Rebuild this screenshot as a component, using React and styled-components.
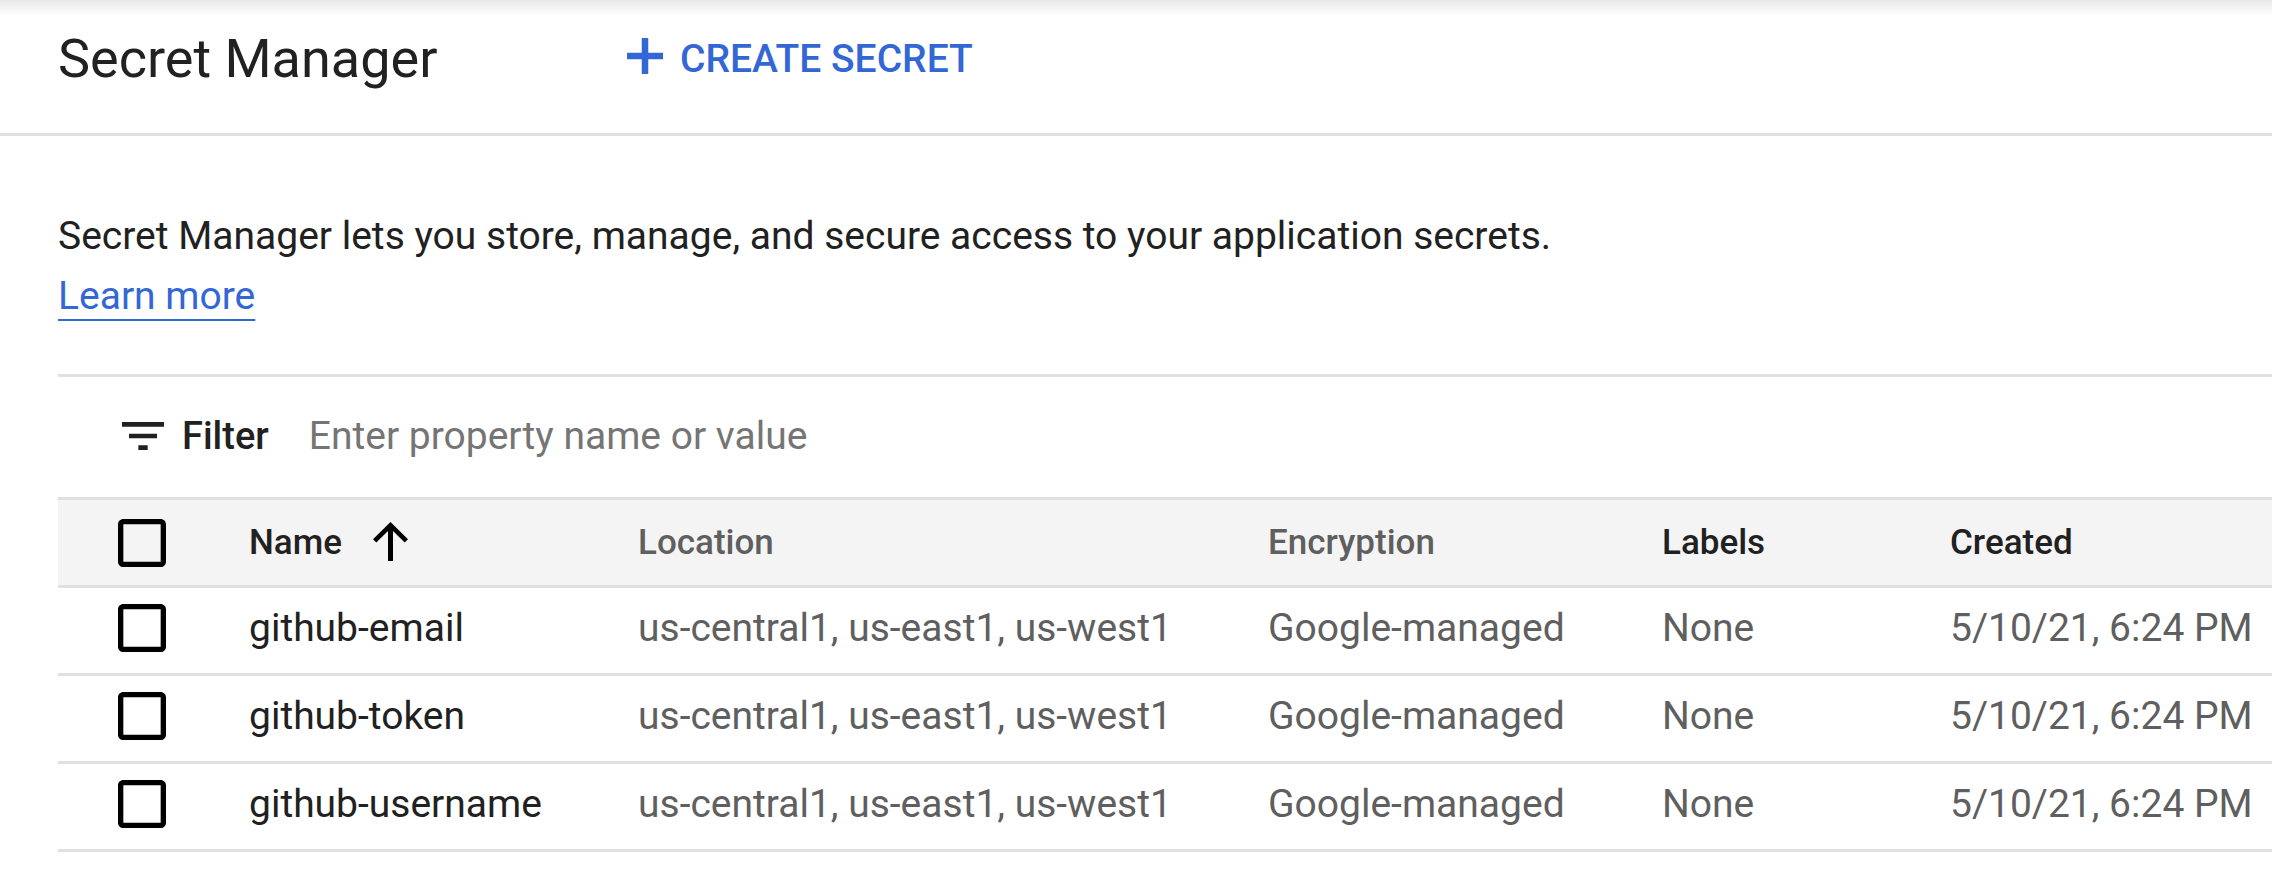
import React from "react"
import styled, { createGlobalStyle } from "styled-components"

const GlobalStyle = createGlobalStyle`
  html, body {
    margin: 0;
    padding: 0;
    background: #fff;
    overflow: hidden;
  }
  body {
    font-family: Roboto, "Liberation Sans", Arial, sans-serif;
    color: #212121;
  }
`

const Page = styled.div`
  width: 2272px;
  height: 884px;
  overflow: hidden;
  background: #fff;
`

const Header = styled.header`
  display: flex;
  align-items: center;
  height: 117px;
  padding: 0 0 16px 58px;
  border-bottom: 3px solid #e0e0e0;
  background: linear-gradient(#e8e8e8, #fff 16px);
`

const Title = styled.h1`
  margin: 0;
  width: 569px;
  flex: 0 0 auto;
  font-size: 54px;
  font-weight: 400;
  line-height: 64px;
  color: #212121;
`

const CreateButton = styled.button`
  display: flex;
  align-items: center;
  gap: 17px;
  padding: 0;
  border: none;
  background: none;
  font-family: inherit;
  font-size: 39px;
  font-weight: 500;
  line-height: 48px;
  text-transform: uppercase;
  color: #3367d6;
  cursor: pointer;

  & > svg {
    margin-bottom: 6px;
  }
`

const Intro = styled.section`
  padding: 70px 58px 0;
  font-size: 39px;
  line-height: 60px;
`

const Description = styled.p`
  margin: 0;
`

const LearnMore = styled.a`
  color: #3367d6;
  text-decoration: underline;
  text-decoration-thickness: 2px;
  text-underline-offset: 10px;
`

const Table = styled.div`
  margin: 48px 0 0 58px;
  border-top: 3px solid #e0e0e0;
`

const FilterBar = styled.div`
  display: flex;
  align-items: center;
  height: 118px;
  padding-bottom: 2px;
  padding-left: 57px;
  border-bottom: 3px solid #e0e0e0;
`

const FilterLabel = styled.label`
  margin-left: 11px;
  font-size: 38px;
  font-weight: 500;
  color: #212121;
`

const FilterInput = styled.input`
  flex: 1;
  margin-left: 40px;
  padding: 0;
  border: none;
  outline: none;
  background: none;
  font-family: inherit;
  font-size: 39px;
  color: #212121;

  &::placeholder {
    color: #757575;
  }
`

const Row = styled.div`
  display: grid;
  grid-template-columns: 191px 389px 630px 394px 288px 1fr;
  align-items: center;
  height: ${({ $head }) => ($head ? "85px" : "80px")};
  padding-bottom: ${({ $head }) => ($head ? "0" : "5px")};
  border-bottom: 3px solid #e0e0e0;
  background: ${({ $head }) => ($head ? "#f4f4f4" : "#fff")};
  font-size: ${({ $head }) => ($head ? "35px" : "39px")};
  font-weight: ${({ $head }) => ($head ? 500 : 400)};
`

const CheckCell = styled.div`
  display: flex;
  padding-left: 52px;
`

const Cell = styled.div`
  display: flex;
  align-items: center;
  white-space: nowrap;
  color: ${({ $muted }) => ($muted ? "#5f5f5f" : "#212121")};

  & > svg {
    margin-left: 31px;
    margin-bottom: 2px;
  }
`

const PlusIcon = () => (
  <svg width="36" height="36" viewBox="0 0 36 36" fill="currentColor">
    <path d="M14.75 0h6.5v14.75H36v6.5H21.25V36h-6.5V21.25H0v-6.5h14.75z" />
  </svg>
)

const FilterIcon = () => (
  <svg width="56" height="56" viewBox="0 0 24 24" fill="#212121">
    <path d="M10 18h4v-2h-4v2zM3 6v2h18V6H3zm3 7h12v-2H6v2z" />
  </svg>
)

const CheckboxIcon = () => (
  <svg width="64" height="64" viewBox="0 0 24 24" fill="#000">
    <path d="M19 5v14H5V5h14m0-2H5c-1.1 0-2 .9-2 2v14c0 1.1.9 2 2 2h14c1.1 0 2-.9 2-2V5c0-1.1-.9-2-2-2z" />
  </svg>
)

const ArrowUp = () => (
  <svg width="35" height="39" viewBox="0 0 35 39" fill="#000">
    <path d="M0 17.3l3.3 3.3L15 8.9V39h5V8.9l11.7 11.7 3.3-3.3L17.5 0z" />
  </svg>
)

const secrets = [
  { name: "github-email" },
  { name: "github-token" },
  { name: "github-username" },
]

export default function App() {
  return (
    <Page>
      <GlobalStyle />
      <Header>
        <Title>Secret Manager</Title>
        <CreateButton>
          <PlusIcon />
          Create secret
        </CreateButton>
      </Header>

      <Intro>
        <Description>
          Secret Manager lets you store, manage, and secure access to your application secrets.
        </Description>
        <LearnMore href="#">Learn more</LearnMore>
      </Intro>

      <Table>
        <FilterBar>
          <FilterIcon />
          <FilterLabel htmlFor="filter">Filter</FilterLabel>
          <FilterInput id="filter" placeholder="Enter property name or value" />
        </FilterBar>

        <Row $head>
          <CheckCell>
            <CheckboxIcon />
          </CheckCell>
          <Cell>
            Name
            <ArrowUp />
          </Cell>
          <Cell $muted>Location</Cell>
          <Cell $muted>Encryption</Cell>
          <Cell>Labels</Cell>
          <Cell>Created</Cell>
        </Row>

        {secrets.map((s) => (
          <Row key={s.name}>
            <CheckCell>
              <CheckboxIcon />
            </CheckCell>
            <Cell>{s.name}</Cell>
            <Cell $muted>us-central1, us-east1, us-west1</Cell>
            <Cell $muted>Google-managed</Cell>
            <Cell $muted>None</Cell>
            <Cell $muted>5/10/21, 6:24 PM</Cell>
          </Row>
        ))}
      </Table>
    </Page>
  )
}
